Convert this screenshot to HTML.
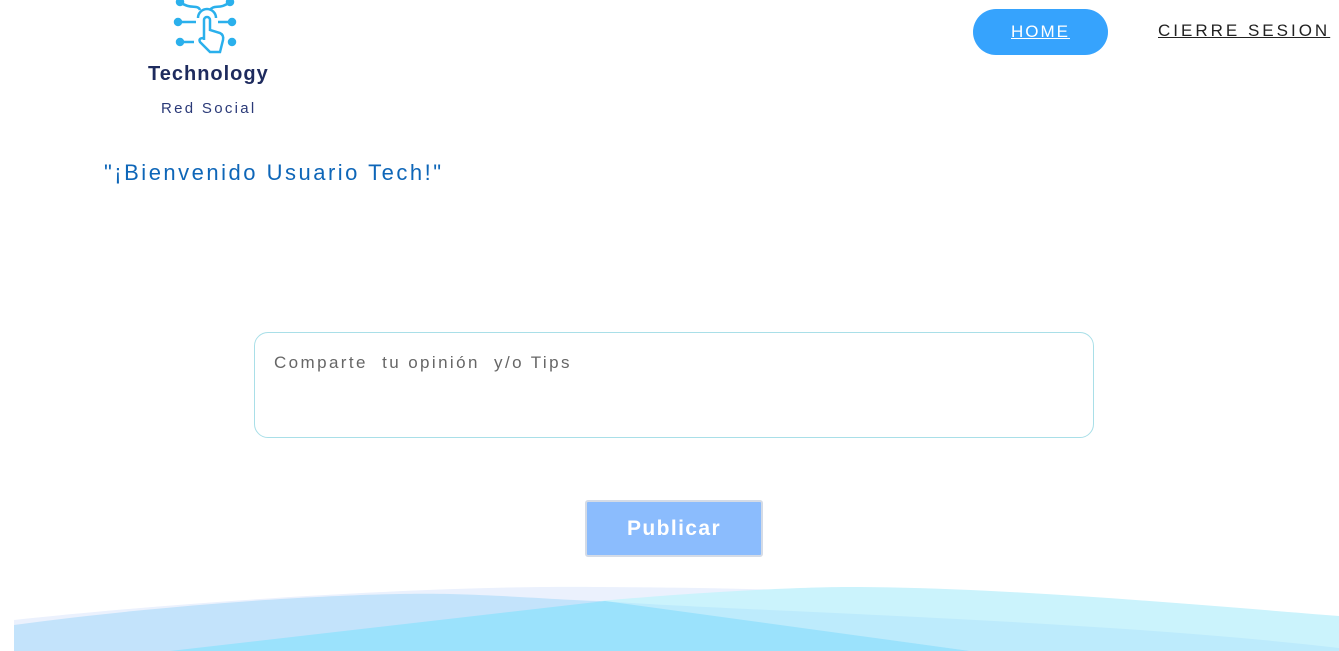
<!DOCTYPE html>
<html><head><meta charset="utf-8"><style>
body{margin:0;width:1339px;height:651px;overflow:hidden;background:#fff;font-family:"Liberation Sans",sans-serif;position:relative}
.a{position:absolute;white-space:nowrap}
</style></head><body>
<svg class="a" style="left:170px;top:0" width="80" height="62" viewBox="0 0 80 62" fill="none" stroke="#2ab0ec" stroke-width="2.5">
<path d="M10 2 C20 10 28 4 30 10 M60 2 C50 10 44 4 40 10 M8 22 H26 M62 22 H48 M10 42 H24"/>
<circle cx="10" cy="2" r="3" fill="#2ab0ec"/><circle cx="60" cy="2" r="3" fill="#2ab0ec"/>
<circle cx="8" cy="22" r="3" fill="#2ab0ec"/><circle cx="62" cy="22" r="3" fill="#2ab0ec"/>
<circle cx="10" cy="42" r="3" fill="#2ab0ec"/><circle cx="62" cy="42" r="3" fill="#2ab0ec"/>
<path d="M28 18 A9 9 0 0 1 46 18"/>
<path d="M34 40 V20 a3 3 0 0 1 6 0 V30 l10 3 q4 2 3 7 l-3 12 H40 l-10-10 q-2-4 4-4"/>
</svg>
<div class="a" style="left:148px;top:63px;font-size:20px;font-weight:bold;color:#1e2b5e;letter-spacing:1px">Technology</div>
<div class="a" style="left:161px;top:100px;font-size:15px;color:#2b3a78;letter-spacing:2.3px">Red Social</div>
<div class="a" style="left:973px;top:9px;width:135px;height:46px;border-radius:23px;background:#36a3fd;color:#fff;font-size:17px;text-align:center;line-height:46px;text-decoration:underline;letter-spacing:2px">HOME</div>
<div class="a" style="left:1158px;top:21px;font-size:17px;color:#222;text-decoration:underline;letter-spacing:3px">CIERRE SESION</div>
<div class="a" style="left:104px;top:160px;font-size:22px;color:#0e66b8;letter-spacing:2.5px">"¡Bienvenido Usuario Tech!"</div>
<div class="a" style="left:254px;top:332px;width:838px;height:104px;border:1px solid #a9dfe8;border-radius:14px"></div>
<div class="a" style="left:274px;top:353px;font-size:17px;color:#666;letter-spacing:2.4px">Comparte&nbsp; tu opinión&nbsp; y/o Tips</div>
<div class="a" style="left:585px;top:500px;width:178px;height:57px;background:#8bbcfd;border:2px solid #d4dbe6;box-sizing:border-box;border-radius:3px;color:#fff;font-weight:bold;font-size:21px;text-align:center;line-height:53px;letter-spacing:1.4px">Publicar</div>
<svg class="a" style="left:0;top:570px" width="1339" height="81" viewBox="0 0 1339 81">
<path d="M14 50 C200 30 450 15 600 17 C800 18 1000 25 1339 50 V81 H14Z" fill="#ebf1fd"/>
<path d="M14 55 C200 30 380 22 450 24 C520 26 560 30 600 31 L970 81 H14Z" fill="#c3e3fb"/>
<path d="M600 31 C700 22 800 17 850 17 C1000 17 1200 35 1339 46 V81 H970Z" fill="#cbf3fc"/>
<path d="M600 31 C760 42 1100 50 1339 78 V81 H970Z" fill="#bdebfc"/>
<path d="M170 81 L605 31 L970 81Z" fill="#9be2fc"/>
</svg>
</body></html>
